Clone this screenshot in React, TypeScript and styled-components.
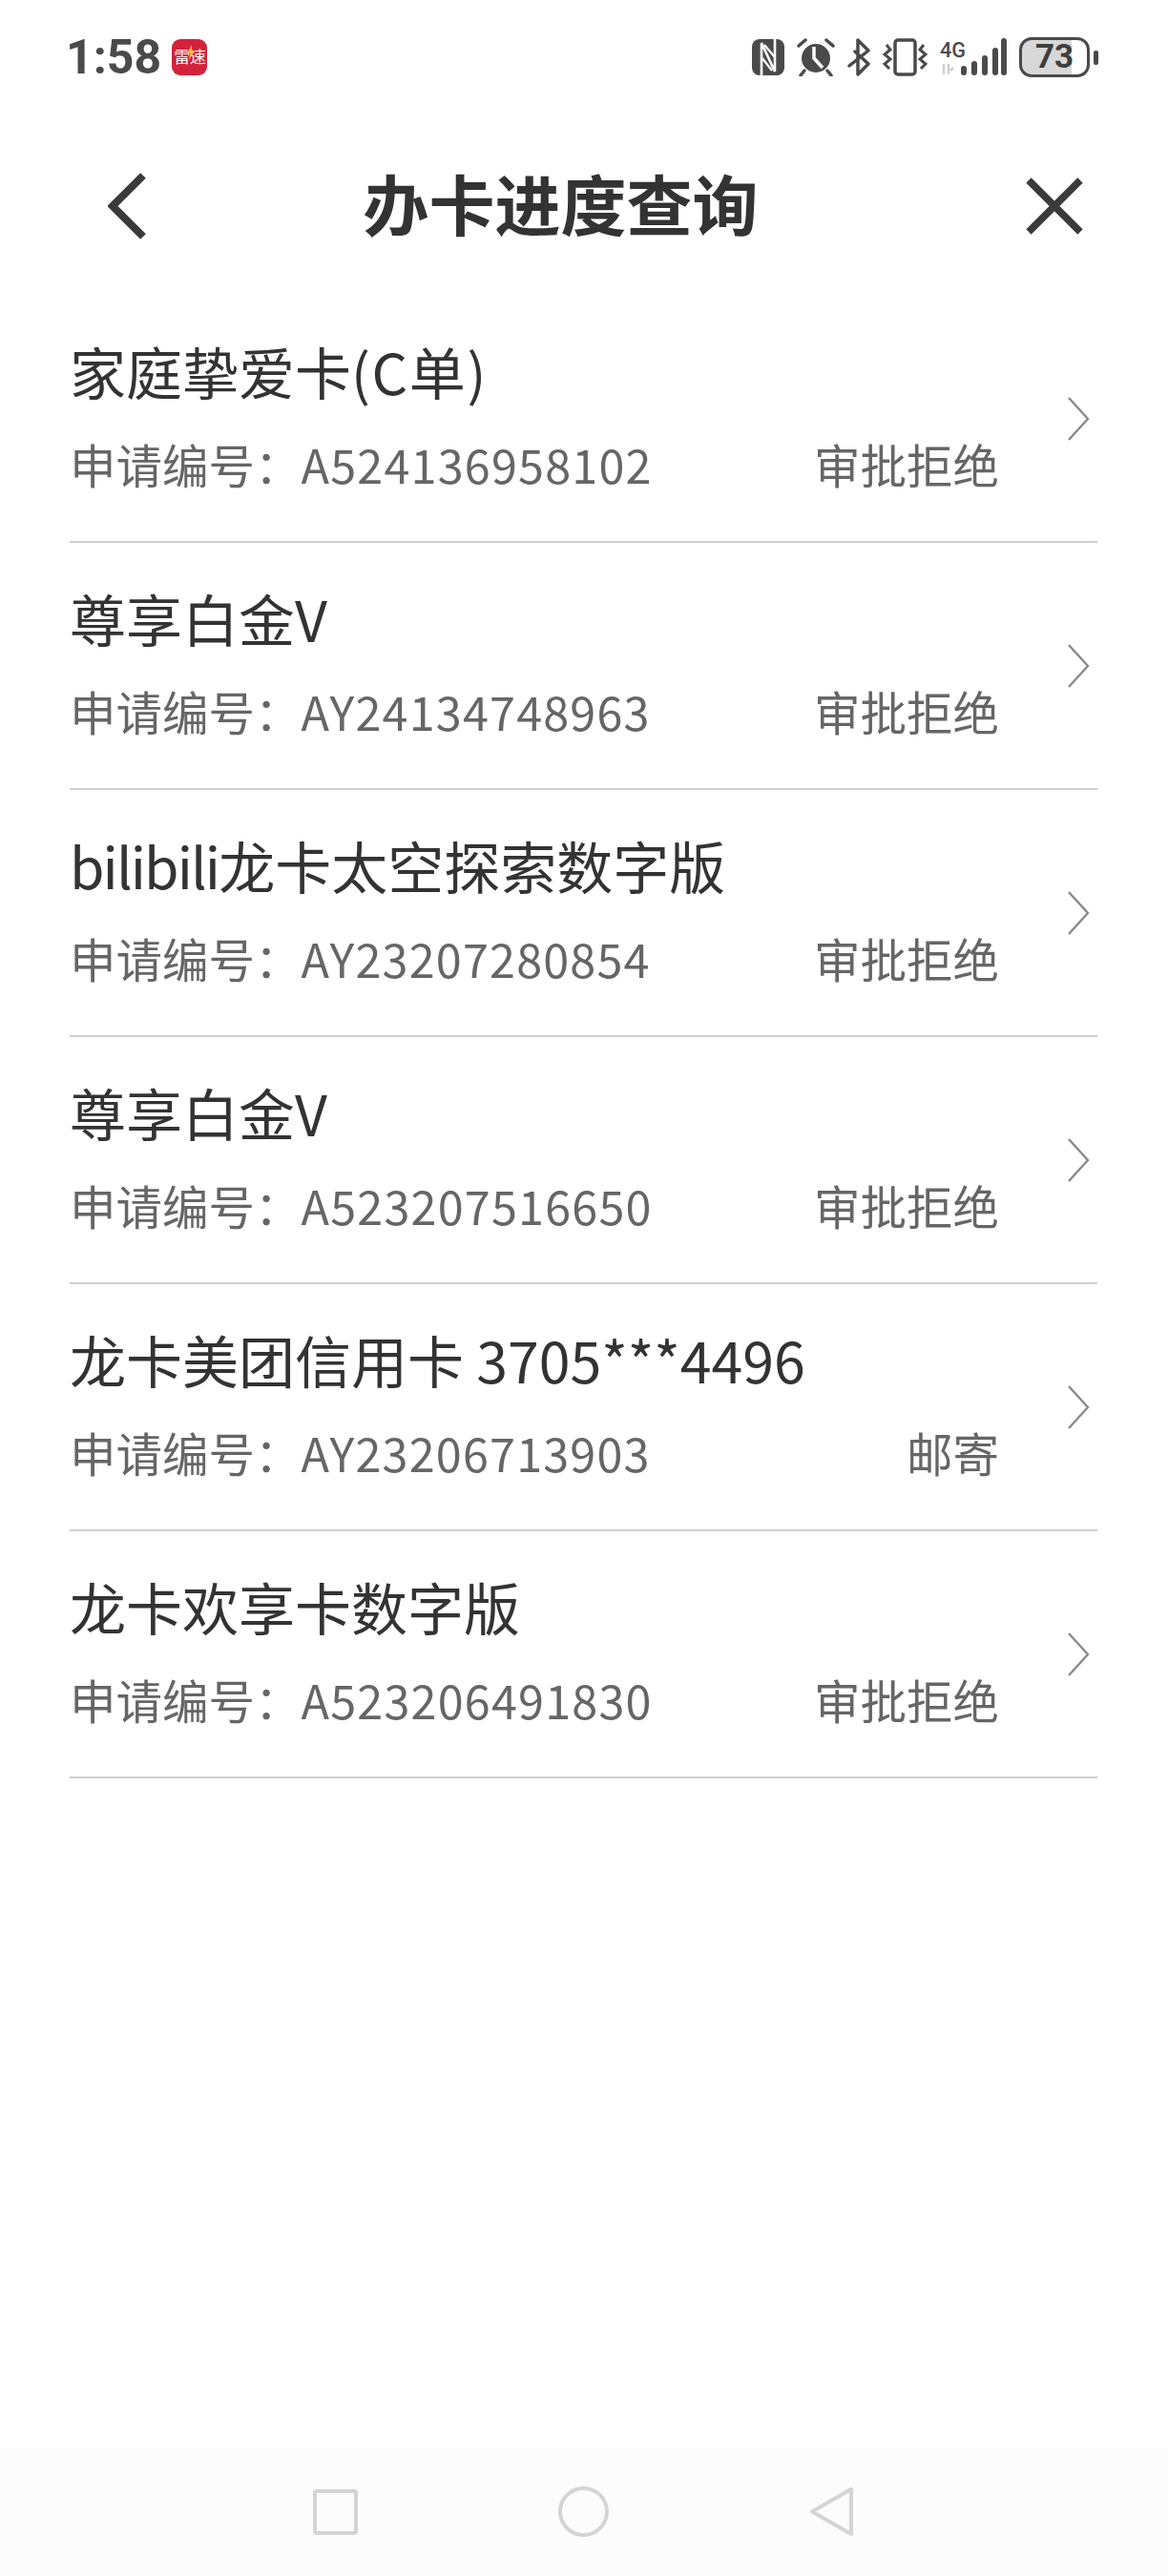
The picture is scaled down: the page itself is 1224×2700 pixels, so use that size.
import styled, { createGlobalStyle } from "styled-components";

const GlobalStyle = createGlobalStyle`
  html, body {
    margin: 0;
    padding: 0;
    background: #fff;
  }
  * {
    box-sizing: border-box;
  }
`;

const Page = styled.div`
  width: 1224px;
  height: 2700px;
  display: flex;
  flex-direction: column;
  background: #fff;
  font-family: "Noto Sans CJK SC", "Noto Sans", sans-serif;
`;

const StatusBar = styled.div`
  height: 120px;
  padding: 38px 73px 0 69px;
  display: flex;
  justify-content: space-between;
  align-items: flex-start;
`;

const StatusLeft = styled.div`
  display: flex;
  align-items: center;
  gap: 11px;
  height: 44px;
`;

const Clock = styled.span`
  font-family: Roboto, sans-serif;
  font-size: 50px;
  font-weight: 700;
  line-height: 44px;
  color: #4a4a4a;
`;

const AppBadge = styled.div`
  position: relative;
  width: 37px;
  height: 38px;
  border-radius: 9px;
  background: #d3233a;
  color: #fff;
  font-size: 17px;
  line-height: 36px;
  letter-spacing: -0.5px;
  text-align: center;
  white-space: nowrap;
  overflow: hidden;
`;

const BadgeBolt = styled.svg`
  position: absolute;
  left: 16px;
  top: 6px;
`;

const StatusRight = styled.div`
  display: flex;
  align-items: center;
  height: 44px;
  gap: 13px;
`;

const Battery = styled.div`
  width: 74px;
  height: 42px;
  border: 3px solid #4a4a4a;
  border-radius: 13px;
  background: linear-gradient(to right, #d8d8d8 77%, #fff 77%);
  color: #3f3f3f;
  font-family: Roboto, sans-serif;
  font-size: 35px;
  font-weight: 700;
  line-height: 36px;
  text-align: center;
`;

const BatteryWrap = styled.div`
  display: flex;
  align-items: center;
  gap: 4px;
`;

const BatteryNib = styled.div`
  width: 5px;
  height: 15px;
  border-radius: 2px;
  background: #4a4a4a;
`;

const Header = styled.div`
  height: 192px;
  padding: 0 89px 0 113px;
  display: flex;
  align-items: center;
  justify-content: space-between;
  margin-bottom: -2px;
`;

const HeaderTitle = styled.div`
  margin: -8px 53px 0 0;
  font-size: 69px;
  font-weight: 700;
  line-height: 96px;
  color: #333;
`;

const List = styled.div`
  margin: 0 74px 0 73px;
`;

const Row = styled.div`
  height: 259px;
  border-bottom: 2px solid #cfcfcf;
  padding-right: 8px;
  display: flex;
  align-items: center;
  justify-content: space-between;
`;

const RowBody = styled.div`
  width: 974px;
  padding-bottom: 9px;
`;

const RowTitle = styled.div`
  font-size: 59px;
  line-height: 84px;
  color: #333;
  white-space: nowrap;
`;

const TitleLatin = styled.span<{ $track: number }>`
  letter-spacing: ${(props) => props.$track}px;
`;

const RowMeta = styled.div`
  margin-top: 20px;
  display: flex;
  justify-content: space-between;
  font-size: 48.5px;
  line-height: 70px;
  color: #666;
`;

const Serial = styled.span`
  letter-spacing: 1.2px;
`;

const NavBar = styled.div`
  margin-top: auto;
  height: 135px;
  background: #fcfcfc;
  padding: 0 329px 0 328px;
  display: flex;
  align-items: center;
  justify-content: space-between;
`;

const BackIcon = () => (
  <svg width="40" height="70" viewBox="0 0 40 70" fill="none" stroke="#3a3a3a" strokeWidth="8">
    <path d="M37 3 L5 35 L37 67" />
  </svg>
);

const CloseIcon = () => (
  <svg width="60" height="60" viewBox="0 0 60 60" fill="none" stroke="#3a3a3a" strokeWidth="7.5">
    <path d="M3 3 L57 57 M57 3 L3 57" />
  </svg>
);

const ChevronIcon = () => (
  <svg width="24" height="46" viewBox="0 0 24 46" fill="none" stroke="#8a8a8a" strokeWidth="2.4">
    <path d="M2 1 L22 23 L2 45" />
  </svg>
);

const NfcIcon = () => (
  <svg width="34" height="38" viewBox="0 0 34 38" fill="none">
    <rect width="34" height="38" rx="8" fill="#4a4a4a" />
    <path d="M10 38 V4 L24 34 V0" stroke="#fff" strokeWidth="2.6" />
    <path d="M13 6 L24 19 M10 19 L21 33" stroke="#fff" strokeWidth="2.2" />
  </svg>
);

const AlarmIcon = () => (
  <svg width="40" height="40" viewBox="0 0 40 40">
    <circle cx="20" cy="21" r="15" fill="#4a4a4a" />
    <path d="M18 9 V21 L27 31" fill="none" stroke="#fff" strokeWidth="3.5" />
    <path d="M2 8 L9 2 M38 8 L31 2 M8 34 L4 39 M32 34 L36 39" stroke="#4a4a4a" strokeWidth="3.5" strokeLinecap="round" />
  </svg>
);

const BluetoothIcon = () => (
  <svg width="24" height="40" viewBox="0 0 24 40" fill="none" stroke="#4a4a4a" strokeWidth="3.5" strokeLinejoin="round" strokeLinecap="round">
    <path d="M2 29 L22 13 L11 2 V38 L22 27 L8 14" />
  </svg>
);

const VibrateIcon = () => (
  <svg width="47" height="40" viewBox="0 0 47 40" fill="none" stroke="#4a4a4a" strokeWidth="3">
    <rect x="13" y="2" width="21" height="36" rx="3" strokeWidth="3.5" />
    <path d="M4 7 L8 12 L2 17 L8 22 L2 27 L7 32" />
    <path d="M43 7 L39 12 L45 17 L39 22 L45 27 L40 32" />
  </svg>
);

const SignalIcon = () => (
  <svg width="70" height="40" viewBox="0 0 70 40">
    <text x="0" y="20" fontFamily="Roboto, sans-serif" fontSize="22" fontWeight="500" fill="#4a4a4a" textLength="27" lengthAdjust="spacingAndGlyphs">4G</text>
    <path d="M4 27 V38 M9 38 V27 M14 31 L11 34" stroke="#cfcfcf" strokeWidth="2.5" fill="none" />
    <g fill="#4a4a4a">
      <rect x="22" y="29" width="6" height="10" rx="3" />
      <rect x="33" y="24" width="6" height="15" rx="3" />
      <rect x="44" y="18" width="6" height="21" rx="3" />
      <rect x="55" y="10" width="6" height="29" rx="3" />
      <rect x="64" y="0" width="6" height="39" rx="3" />
    </g>
  </svg>
);

const SquareIcon = () => (
  <svg width="47" height="48" viewBox="0 0 47 48" fill="none" stroke="#d4d4d4" strokeWidth="4">
    <rect x="2" y="2" width="43" height="44" rx="2" />
  </svg>
);

const CircleIcon = () => (
  <svg width="53" height="53" viewBox="0 0 53 53" fill="none" stroke="#d4d4d4" strokeWidth="4">
    <circle cx="26.5" cy="26.5" r="24.5" />
  </svg>
);

const TriangleIcon = () => (
  <svg width="47" height="53" viewBox="0 0 47 53" fill="none" stroke="#d4d4d4" strokeWidth="4" strokeLinejoin="round">
    <path d="M44 3 V50 L3 26.5 Z" />
  </svg>
);

const cards = [
  { name: <>家庭挚爱卡<TitleLatin $track={1.6}>(C单)</TitleLatin></>, serial: "A524136958102", status: "审批拒绝" },
  { name: <>尊享白金V</>, serial: "AY24134748963", status: "审批拒绝" },
  { name: <><TitleLatin $track={-1.9}>bilibili</TitleLatin>龙卡太空探索数字版</>, serial: "AY23207280854", status: "审批拒绝" },
  { name: <>尊享白金V</>, serial: "A523207516650", status: "审批拒绝" },
  { name: <>龙卡美团信用卡 3705***4496</>, serial: "AY23206713903", status: "邮寄" },
  { name: <>龙卡欢享卡数字版</>, serial: "A523206491830", status: "审批拒绝" },
];

function App() {
  return (
    <Page>
      <GlobalStyle />
      <StatusBar>
        <StatusLeft>
          <Clock>1:58</Clock>
          <AppBadge>
            雷速
            <BadgeBolt width="8" height="16" viewBox="0 0 8 16" fill="#f5b942">
              <path d="M5 0 L0 9 H3 L2 16 L8 6 H5 Z" />
            </BadgeBolt>
          </AppBadge>
        </StatusLeft>
        <StatusRight>
          <NfcIcon />
          <AlarmIcon />
          <BluetoothIcon />
          <VibrateIcon />
          <SignalIcon />
          <BatteryWrap>
            <Battery>73</Battery>
            <BatteryNib />
          </BatteryWrap>
        </StatusRight>
      </StatusBar>
      <Header>
        <BackIcon />
        <HeaderTitle>办卡进度查询</HeaderTitle>
        <CloseIcon />
      </Header>
      <List>
        {cards.map((card, i) => (
          <Row key={i}>
            <RowBody>
              <RowTitle>{card.name}</RowTitle>
              <RowMeta>
                <span>
                  申请编号：<Serial>{card.serial}</Serial>
                </span>
                <span>{card.status}</span>
              </RowMeta>
            </RowBody>
            <ChevronIcon />
          </Row>
        ))}
      </List>
      <NavBar>
        <SquareIcon />
        <CircleIcon />
        <TriangleIcon />
      </NavBar>
    </Page>
  );
}

export default App;
